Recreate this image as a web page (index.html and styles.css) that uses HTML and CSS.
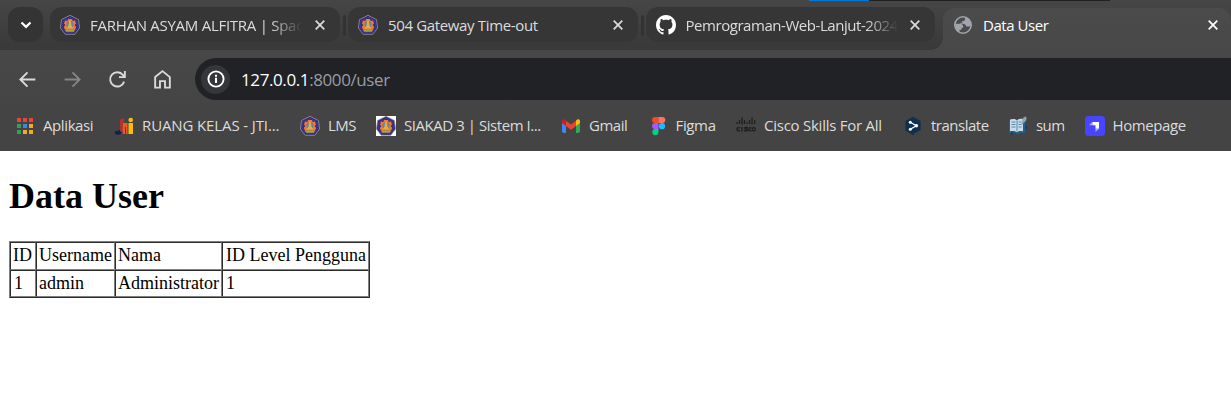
FILE: index.html
```html
<!DOCTYPE html>
<html lang="id">
<head>
<meta charset="utf-8">
<title>Data User</title>
<link rel="stylesheet" href="styles.css">
</head>
<body>
<svg class="defs" width="0" height="0">
  <symbol id="crest" viewBox="0 0 20 20">
    <path d="M10 .3 18.500 4.600 19.600 13 14.800 19.300H5.200L.4 13 1.500 4.600Z" fill="#332b7c" stroke="#9b969f" stroke-width=".8"/>
    <path d="M10 2.500 16.800 6 17.700 12.500 14 17.200H6L2.300 12.500 3.200 6Z" fill="none" stroke="#6660a0" stroke-width=".6" stroke-dasharray="1 1"/>
    <path d="M8 4h4l.7 2 2.300-.5 1 3-1.300 1.500 1.500 2-1.200 2.800-3-.1H8l-3 .1L3.800 12l1.500-2L4 8.500l1-3 2.300.5Z" fill="#f37a2b"/>
    <circle cx="10" cy="9.700" r="3.600" fill="#6c7bb0"/>
    <path d="M9.200 5.500h1.600l.7 5 2 3h-7l2-3Z" fill="#d7b43d"/>
    <path d="M5 14.500h10l-1 2.200H6Z" fill="#b2a247"/>
  </symbol>
  <symbol id="close" viewBox="0 0 10 10"><path d="m.7.7 8.600 8.600m0-8.600L.7 9.300" fill="none" stroke="currentColor" stroke-width="1.700"/></symbol>
</svg>

<div class="browser">
  <div class="tabstrip">
    <div class="window-edge"></div>
    <div class="search-tabs"><svg width="12" height="8" viewBox="0 0 12 8"><path d="m1.500 1.500 4.500 4.400 4.500-4.400" fill="none" stroke="#fff" stroke-width="2.200"/></svg></div>
    <div class="tab">
      <svg class="favicon"><use href="#crest"/></svg>
      <span class="title fade farhan">FARHAN ASYAM ALFITRA | Spac</span>
      <svg class="close"><use href="#close"/></svg>
    </div>
    <i class="separator"></i>
    <div class="tab">
      <svg class="favicon"><use href="#crest"/></svg>
      <span class="title gateway">504 Gateway Time-out</span>
      <svg class="close"><use href="#close"/></svg>
    </div>
    <i class="separator"></i>
    <div class="tab">
      <svg class="favicon" viewBox="0 0 16 16"><path fill="#fff" d="M8 0C3.580 0 0 3.580 0 8c0 3.540 2.290 6.530 5.470 7.590.4.070.55-.17.55-.38 0-.19-.01-.82-.01-1.490-2.010.37-2.530-.49-2.690-.94-.09-.23-.48-.94-.82-1.130-.28-.15-.68-.52-.01-.53.63-.01 1.080.58 1.230.82.72 1.210 1.870.87 2.330.66.07-.52.28-.87.51-1.070-1.780-.2-3.640-.89-3.640-3.950 0-.87.31-1.590.82-2.150-.08-.2-.36-1.020.08-2.120 0 0 .67-.21 2.200.82.64-.18 1.320-.27 2-.27s1.360.09 2 .27c1.530-1.040 2.200-.82 2.200-.82.44 1.100.16 1.920.08 2.120.51.56.82 1.270.82 2.150 0 3.070-1.870 3.750-3.650 3.950.29.25.54.73.54 1.480 0 1.070-.01 1.930-.01 2.200 0 .21.15.46.55.38A8.010 8.010 0 0 0 16 8c0-4.420-3.580-8-8-8Z"/></svg>
      <span class="title fade github">Pemrograman-Web-Lanjut-2024</span>
      <svg class="close"><use href="#close"/></svg>
    </div>
    <div class="strip-end"></div>
    <div class="tab active">
      <svg class="favicon globe" viewBox="0 0 18 18"><circle cx="9" cy="9" r="8.200" fill="#4b4b4b" stroke="#a0a5ac" stroke-width="1.600"/><path fill="#a0a5ac" d="M1 7.800h5.200c1.700 0 3 1.200 3 2.700v1.200H7.600v2H5.500v3L2 14ZM11 1.500v1.700c0 1-.8 1.800-1.800 1.800H8.300v1.800H6.500v1H9c1.500.2 2.800 1 3.300 2.700h3.200l1.300-.6C18 6 15 2 11 1.500Z"/></svg>
      <span class="title data">Data User</span>
      <svg class="close"><use href="#close"/></svg>
    </div>
  </div>

  <div class="toolbar">
    <svg class="nav" viewBox="0 0 20 20"><path d="M17.500 10H3.500M10 3.200 3.200 10l6.800 6.800"/></svg>
    <svg class="nav dim" viewBox="0 0 20 20"><path d="M2.500 10h14M10 3.200l6.800 6.800-6.800 6.800"/></svg>
    <svg class="nav" viewBox="0 0 20 20"><path d="M16.300 12A6.800 6.800 0 1 1 15.200 5.700L17 7.700M17 2v5.700h-5.600"/></svg>
    <svg class="nav" viewBox="0 0 20 20"><path d="M3 7.700 10 2l7 5.700v10h-4.600v-6.200H7.600v6.200H3Z"/></svg>
    <div class="omnibox">
      <span class="site-info"><svg width="18" height="18" viewBox="0 0 18 18"><circle cx="9" cy="9" r="7.600" fill="none" stroke="#fff" stroke-width="1.900"/><path d="M8 7.800h2V13H8zM8 4.700h2v2H8z" fill="#fff"/></svg></span>
      <span class="url"><b>127.0.0.1</b>:8000/user</span>
    </div>
  </div>

  <div class="bookmarks">
    <div class="bookmark"><svg viewBox="0 0 20 20"><path fill="#e9453a" d="M2 2h4v4H2zm6 0h4v4H8zm6 0h4v4h-4z"/><path fill="#34a05a" d="M2 8h4v4H2zm0 6h4v4H2z"/><path fill="#2c8cf0" d="M8 8h4v4H8z"/><path fill="#f3ab24" d="M14 8h4v4h-4zm-6 6h4v4H8zm6 0h4v4h-4z"/></svg><span class="b-apps">Aplikasi</span></div>
    <div class="bookmark"><svg viewBox="0 0 20 20"><path fill="#132347" d="M1 15c3 0 4-.5 5-1.500L8 16c-1 3-5 3.500-7 2Z"/><path fill="#a9352e" d="M6 3.500 10 2v12c0 3-4 3-4 0Z"/><path fill="#f05a28" d="M9 7h4.500v11H12v-7h-1v7H8.800Z"/><path fill="#fbbc0c" d="M14.500 7H19v11h-4.500z"/><circle cx="16.700" cy="4" r="2.300" fill="#fbbc0c"/></svg><span class="b-ruang">RUANG KELAS - JTI...</span></div>
    <div class="bookmark"><svg><use href="#crest"/></svg><span class="b-lms">LMS</span></div>
    <div class="bookmark"><svg class="white"><use href="#crest"/></svg><span class="b-siakad">SIAKAD 3 | Sistem I...</span></div>
    <div class="bookmark"><svg viewBox="0 0 20 20"><path fill="#4285f4" d="M1 5h4v12H2.500L1 15.500Z"/><path fill="#34a853" d="M15 5h4v10.500L17.500 17H15Z"/><path fill="#ea4335" d="M5 4.800 10 8.600l5-3.800V10l-5 3.700L5 10Z"/><path fill="#c5221f" d="M1 5.500C1 3 3.300 2.500 5 4.800V10L1 7Z"/><path fill="#fbbc04" d="M19 5.500c0-2.500-2.300-3-4-.7V10l4-3Z"/></svg><span class="b-gmail">Gmail</span></div>
    <div class="bookmark"><svg viewBox="0 0 20 20"><path fill="#f24e1e" d="M10.500 1H7a3 3 0 0 0 0 6h3.500z"/><path fill="#ff7262" d="M10.500 1h3.800a3 3 0 0 1 0 6h-3.800z"/><path fill="#a259ff" d="M10.500 7H7a3 3 0 0 0 0 6h3.500z"/><circle cx="14" cy="10.200" r="3.100" fill="#1abcfe"/><path fill="#0acf83" d="M10.500 13H7.200a3.100 3.100 0 1 0 3.300 3.100z"/></svg><span class="b-figma">Figma</span></div>
    <div class="bookmark"><svg viewBox="0 0 20 20"><path fill="none" stroke="#202020" stroke-width="1.300" d="M1 6v2m2.500-4v4M6 1.500v7M8.500 4v4M11 6v2m2.500-4v4M16 1.500v7M18.700 4v4"/><path fill="none" stroke="#202020" stroke-width="1.500" d="M4 11.700H2.500q-1.500 0-1.500 1.500t1.500 1.500H4M6 11v4.400m6-3.900H9.500q-1.500 0-.5 1.200l2 .6q1 1.300-.5 1.400H8m7.300-3H14q-1.200 0-1.200 1.500t1.200 1.500h1.300"/><circle cx="17.700" cy="13.200" r="1.600" fill="none" stroke="#202020" stroke-width="1.400"/></svg><span class="b-cisco">Cisco Skills For All</span></div>
    <div class="bookmark"><svg viewBox="0 0 20 20"><path fill="#10304d" d="M10 .8 17.600 5v9l-6.800 4v1.500L8 18l-5.600-3.500V5Z"/><path d="m7.300 6.300 6 3.400-6 3.500" fill="none" stroke="#fff" stroke-width="1.300"/><g fill="#fff"><circle cx="7.300" cy="6.300" r="1.500"/><circle cx="13.400" cy="9.700" r="1.700"/><circle cx="7.300" cy="13.200" r="1.500"/></g></svg><span class="b-translate">translate</span></div>
    <div class="bookmark"><svg viewBox="0 0 20 20"><path fill="#285c80" d="M1 5h16v12h-5l-2 2-2-2H1z"/><path fill="#c4dceb" d="M2 3.500c3-1 5-.8 7 .8 2-1.600 4-1.800 6-1v12c-3-.7-4-.5-6 1-2-1.500-4-1.700-7-1Z"/><path stroke="#527e9d" stroke-width=".9" d="M9 4.500v11M3.500 6h4M3.500 8.500h4m-4 2.500h4M10.500 6h3m-3 2.500h3m-3 2.500h3"/><path d="M13 10 15 2q3-3 3.500 0T14.500 8" fill="#8ba4b0"/><path stroke="#173a70" stroke-width="1.700" d="M4 16v3m14.500-9v3"/></svg><span class="b-sum">sum</span></div>
    <div class="bookmark"><svg viewBox="0 0 20 20"><rect width="20" height="20" rx="3.500" fill="#4945ff"/><path fill="#fff" d="M7.300 6H14v6.700h-3.500V9.300H7.300Z"/><path fill="#a7a5ff" d="M7.300 6v3.300H4Zm3.200 6.700H14L10.500 16Z"/></svg><span class="b-home">Homepage</span></div>
  </div>
</div>

<main class="page">
  <h1>Data User</h1>
  <table>
    <colgroup><col class="c-id"><col class="c-user"><col class="c-name"><col class="c-level"></colgroup>
    <tr class="head"><td>ID</td><td>Username</td><td>Nama</td><td class="level">ID Level Pengguna</td></tr>
    <tr class="row"><td class="level">1</td><td>admin</td><td>Administrator</td><td class="level">1</td></tr>
  </table>
</main>
</body>
</html>
```
FILE: styles.css
```css
* { box-sizing: border-box; }
body { margin: 0; background: #fff; height: 417px; overflow: hidden; }
.defs { position: absolute; }
svg { display: block; flex: none; }

.browser { height: 151px; background: #444; color: #dcdcdc; font: 15px/20px "Open Sans", "Noto Sans", sans-serif; white-space: nowrap; overflow: hidden; }
.tabstrip { position: relative; display: flex; height: 50px; padding: 7px 0 0 8px; background: linear-gradient(#464646, #3a3a3a 90%); }
.window-edge { position: absolute; top: 0; left: 809px; width: 301px; height: 1px; background: linear-gradient(90deg, #0078d7 60px, #202020 60px); }
.search-tabs { display: flex; align-items: center; justify-content: center; width: 35px; height: 35px; margin-right: 7px; border-radius: 12px; background: #343434; flex: none; }
.tab { display: flex; align-items: center; width: 290px; height: 35px; padding: 0 15px 0 10px; border-radius: 12px; background: #363636; flex: none; }
.tab + .separator { width: 3px; height: 21px; margin: 8px 2px 0 3px; border-radius: 2px; background: #323232; flex: none; }
.separator + .tab { width: 289.500px; }
.favicon { width: 20px; height: 20px; margin-top: 1px; }
.title { width: 212px; margin-left: 10px; }
.farhan { letter-spacing: -.27px; }
.gateway { letter-spacing: -.35px; }
.github { letter-spacing: -.45px; }
.data { letter-spacing: -.45px; }
.fade { -webkit-mask-image: linear-gradient(90deg, #000 180px, transparent 212px); mask-image: linear-gradient(90deg, #000 180px, transparent 212px); }
.close { width: 10px; height: 10px; margin-left: auto; }
.strip-end { width: 8px; flex: none; }
.tab.active { position: relative; width: 288px; height: 43px; padding: 0 13px 8px 11px; margin-top: 1px; height: 42px; border-radius: 12px 12px 0 0; background: linear-gradient(#4b4b4b, #484848); color: #fff; }
.active::before { content: ""; position: absolute; left: -12px; bottom: 0; width: 12px; height: 12px; background: radial-gradient(circle at 0 0, transparent 11.500px, #484848 12px); }
.globe { width: 18px; height: 18px; margin-top: 0; }
.active .title { margin-left: 11px; }

.toolbar { display: flex; align-items: center; height: 58px; padding-left: 17px; background: linear-gradient(#484848, #444); }
.nav { width: 21px; height: 21px; margin-right: 24px; fill: none; stroke: #dadada; stroke-width: 1.800; }
.dim { stroke: #858585; }
.omnibox { display: flex; align-items: center; flex: 1; height: 42px; margin-left: -2px; padding-left: 6px; border-radius: 21px 0 0 21px; background: #202226; }
.site-info { display: flex; align-items: center; justify-content: center; width: 29px; height: 29px; border-radius: 50%; background: #34363a; }
.url { margin-left: 11px; padding-top: 1px; color: #999da1; font-size: 17px; letter-spacing: -.4px; }
.url b { color: #fff; font-weight: 400; }

.bookmarks { display: flex; align-items: center; height: 36px; padding-left: 15px; }
.bookmark { display: flex; align-items: center; gap: 8px; margin-right: 21px; flex: none; }
.bookmark svg { width: 20px; height: 20px; }
.bookmark span { padding-bottom: 2px; }
.bookmark .white { background: #fff; }
.b-apps { width: 50px; letter-spacing: -.4px; }
.b-ruang { width: 137px; letter-spacing: -.12px; }
.b-lms { width: 27px; letter-spacing: -.5px; }
.b-siakad { width: 136px; letter-spacing: -.45px; }
.b-gmail { width: 37.500px; letter-spacing: -.5px; }
.b-figma { width: 39.500px; letter-spacing: -.35px; }
.b-cisco { width: 118px; letter-spacing: -.25px; }
.b-translate { width: 56px; letter-spacing: -.5px; }
.b-sum { width: 27.500px; letter-spacing: -.6px; }
.b-home { width: 73px; letter-spacing: -.4px; }

.page { padding: 25px 9px 0; color: #000; font: 18px/21px "Liberation Serif", "Times New Roman", serif; }
h1 { margin: 0 0 24px; font-size: 36px; line-height: 41px; }
table { width: 361px; table-layout: fixed; border: 1px outset gray; border-spacing: 0; }
td { padding: 1px 2px; border: 1px inset gray; white-space: nowrap; }
.c-id { width: 26px; }
.c-user { width: 79px; }
.c-name { width: 107px; }
.c-level { width: 147px; }
.head { height: 28px; }
.head td { padding: 1px 2px 3px; }
.row { height: 27px; }
.row .level, .head .level { padding-left: 3px; }
```
